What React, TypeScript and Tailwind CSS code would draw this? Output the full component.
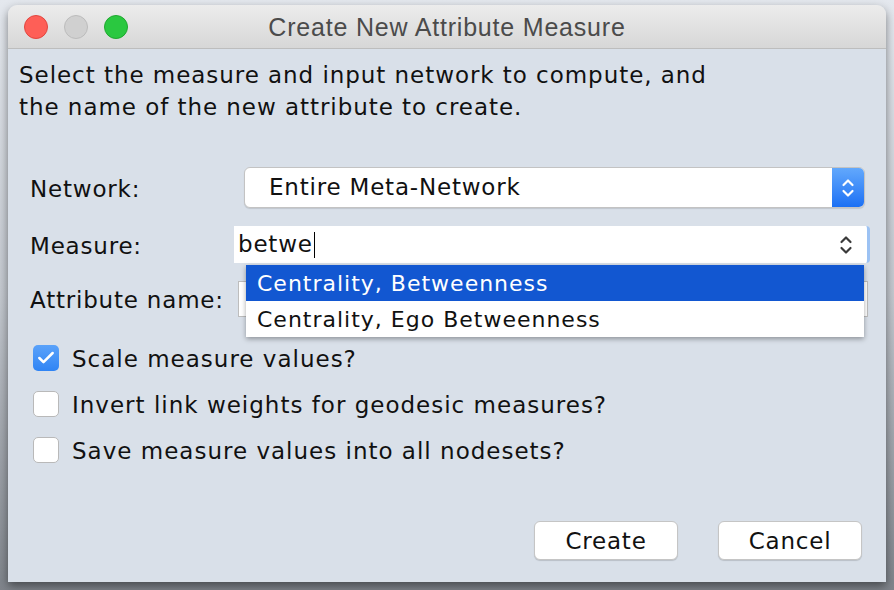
import { Check } from 'lucide-react'

function UpDown({ color }: { color: string }) {
  return (
    <svg width="14" height="22" viewBox="0 0 14 22" fill="none" stroke={color} strokeWidth="2.2" strokeLinecap="round" strokeLinejoin="round">
      <path d="M2.5 8 L7 3.5 L11.5 8" />
      <path d="M2.5 14 L7 18.5 L11.5 14" />
    </svg>
  )
}

function CheckRow({ checked, label }: { checked?: boolean; label: string }) {
  return (
    <div className="flex items-center h-[26px] gap-[13px]">
      {checked ? (
        <div className="w-[26px] h-[26px] rounded-[5px] bg-gradient-to-b from-[#5aa2fa] to-[#2f84f4] flex items-center justify-center">
          <Check size={20} strokeWidth={3} color="#ffffff" />
        </div>
      ) : (
        <div className="w-[26px] h-[26px] rounded-[5px] bg-white border border-[#b9b9b9]" />
      )}
      <span className="pt-[2px] tracking-[1px]">{label}</span>
    </div>
  )
}

export default function App() {
  return (
    <div
      className="w-[894px] h-[590px] overflow-hidden bg-gradient-to-b from-[#e4e8ee] via-[#c3c8cf] to-[#7f848b] pl-[8px] pt-[5px]"
      style={{ fontFamily: '"DejaVu Sans", sans-serif' }}
    >
      <div className="w-[878px] h-[577px] rounded-t-[9px] overflow-hidden shadow-[0_4px_10px_rgba(0,0,0,0.45)] bg-[#d9e0e9] flex flex-col">
        {/* Title bar */}
        <div className="relative h-[44px] shrink-0 bg-gradient-to-b from-[#ececec] to-[#d7d7d7] border-b border-[#bdbdbd] flex items-center">
          <div className="flex items-center gap-[16px] pl-[16px] pt-[1px]">
            <div className="w-[24px] h-[24px] rounded-full bg-[#fe5f57] border border-[#e2463f]" />
            <div className="w-[24px] h-[24px] rounded-full bg-[#d0d0d0] border border-[#bcbcbc]" />
            <div className="w-[24px] h-[24px] rounded-full bg-[#2ac840] border border-[#1fa82f]" />
          </div>
          <div
            className="absolute inset-0 flex items-center justify-center pt-[3px] text-[25px] tracking-[0.8px] text-[#4b4b4b]"
            style={{ fontFamily: '"Liberation Sans", Arial, sans-serif' }}
          >
            Create New Attribute Measure
          </div>
        </div>

        {/* Body */}
        <div className="relative flex flex-col flex-1 text-[23px] tracking-[0.8px] text-[#111]">
          <p className="pl-[11px] pt-[10px] leading-[32px] tracking-[0.95px]">
            Select the measure and input network to compute, and
            <br />
            the name of the new attribute to create.
          </p>

          <div className="flex flex-col pl-[22px] pr-[21px] mt-[44px] gap-[18px]">
            <div className="flex items-center h-[41px]">
              <span className="w-[214px] shrink-0 pt-[3px]">Network:</span>
              <div className="flex-1 h-[41px] flex bg-white rounded-[6px] border border-[#c3c3c3] shadow-[0_1px_1px_rgba(0,0,0,0.12)] overflow-hidden">
                <div className="flex-1 flex items-center pl-[24px]">Entire Meta-Network</div>
                <div className="w-[32px] flex items-center justify-center bg-gradient-to-b from-[#62a8fc] to-[#1b70f4]">
                  <UpDown color="#ffffff" />
                </div>
              </div>
            </div>

            <div className="flex items-center h-[37px]">
              <span className="w-[204px] shrink-0 pt-[3px]">Measure:</span>
              <div className="flex-1 h-[37px] flex items-center bg-white border-r-[3px] border-[#9cc2f3] rounded-r-[4px] -mr-[5px] pl-[4px] pr-[14px]">
                <span>betwe</span>
                <span className="w-[1.5px] h-[26px] bg-black ml-[1px]" />
                <div className="flex-1" />
                <UpDown color="#3a3a3a" />
              </div>
            </div>

            <div className="flex items-center h-[36px]">
              <span className="w-[208px] shrink-0 pt-[3px]">Attribute name:</span>
              <div className="flex-1 h-[36px] bg-white border border-[#bdbdbd] -mr-[3px]" />
            </div>
          </div>

          {/* Dropdown list */}
          <div className="absolute left-[238px] top-[216px] w-[618px] bg-white shadow-[0_2px_5px_rgba(0,0,0,0.35)] flex flex-col text-[22px] tracking-[1px]">
            <div className="h-[36px] flex items-center pl-[11px] bg-[#1257d1] text-white">Centrality, Betweenness</div>
            <div className="h-[36px] flex items-center pl-[11px]">Centrality, Ego Betweenness</div>
          </div>

          <div className="flex flex-col gap-[20px] pl-[25px] mt-[28px]">
            <CheckRow checked label="Scale measure values?" />
            <CheckRow label="Invert link weights for geodesic measures?" />
            <CheckRow label="Save measure values into all nodesets?" />
          </div>

          <div className="flex justify-end gap-[40px] pr-[24px] mt-[58px]">
            <button className="w-[144px] h-[39px] pt-[2px] bg-white rounded-[6px] border border-[#c5c5c5] shadow-[0_1px_1px_rgba(0,0,0,0.15)]">Create</button>
            <button className="w-[144px] h-[39px] pt-[2px] bg-white rounded-[6px] border border-[#c5c5c5] shadow-[0_1px_1px_rgba(0,0,0,0.15)]">Cancel</button>
          </div>
        </div>
      </div>
    </div>
  )
}
